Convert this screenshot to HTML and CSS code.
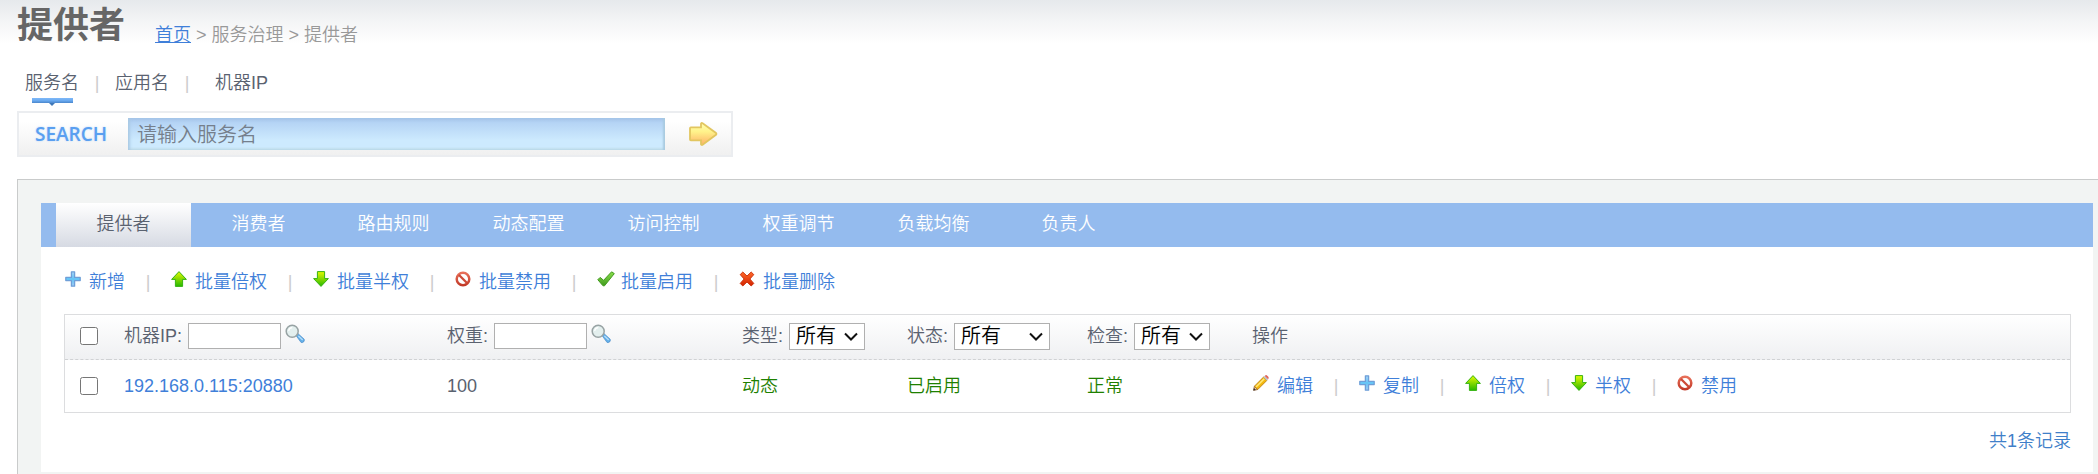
FILE: index.html
```html
<!DOCTYPE html>
<html lang="zh-CN">
<head>
<meta charset="utf-8">
<title>提供者</title>
<link rel="stylesheet" href="styles.css">
</head>
<body>
<svg class="sprite" aria-hidden="true">
  <defs>
    <linearGradient id="g-blue" x1="0" y1="0" x2="0" y2="1"><stop offset="0" stop-color="#a8d4f8"/><stop offset=".5" stop-color="#62c4f6"/><stop offset="1" stop-color="#a4cdf5"/></linearGradient>
    <linearGradient id="g-up" x1="0" y1="0" x2="0" y2="1"><stop offset="0" stop-color="#e4fa00"/><stop offset="1" stop-color="#27b800"/></linearGradient>
    <linearGradient id="g-check" x1="0" y1="0" x2="0" y2="1"><stop offset="0" stop-color="#8be04c"/><stop offset="1" stop-color="#3f9a1c"/></linearGradient>
    <linearGradient id="g-red" x1="0" y1="0" x2="0" y2="1"><stop offset="0" stop-color="#ff6a2a"/><stop offset="1" stop-color="#d32200"/></linearGradient>
    <linearGradient id="g-ban" x1="0" y1="0" x2="0" y2="1"><stop offset="0" stop-color="#e8705a"/><stop offset="1" stop-color="#c23a28"/></linearGradient>
    <linearGradient id="g-gold" x1="0" y1="0" x2="0" y2="1"><stop offset="0" stop-color="#ffffb0"/><stop offset=".4" stop-color="#fff28a"/><stop offset="1" stop-color="#fdb068"/></linearGradient>
  </defs>
  <symbol id="i-add" viewBox="0 0 16 16"><path d="M6.400.8h3.200v5.600h5.600v3.200H9.600v5.600H6.400V9.600H.8V6.400h5.600z" fill="url(#g-blue)" stroke="#6f9fd8" stroke-width="1.300" stroke-linejoin="round"/></symbol>
  <symbol id="i-up" viewBox="0 0 16 16"><path d="M8 .6 15.400 8.400H11.600V15.400H4.400V8.400H.6z" fill="url(#g-up)" stroke="#35b312" stroke-width="1" stroke-linejoin="round"/></symbol>
  <symbol id="i-down" viewBox="0 0 16 16"><path d="M8 15.400.6 7.600H4.400V.6H11.600V7.600H15.400z" fill="url(#g-up)" stroke="#35b312" stroke-width="1" stroke-linejoin="round"/></symbol>
  <symbol id="i-ban" viewBox="0 0 16 16"><circle cx="8" cy="8" r="6.300" fill="#fff" stroke="url(#g-ban)" stroke-width="2.500"/><path d="m4 4 8 8" stroke="#cd4a37" stroke-width="2.300"/></symbol>
  <symbol id="i-check" viewBox="0 0 18 16"><path d="m.8 8.700 2.300-2.300 3.500 2.900L14.600.8 17.300 2.600 7.500 14.800H6z" fill="url(#g-check)" stroke="#439a20" stroke-width="1" stroke-linejoin="round"/></symbol>
  <symbol id="i-delete" viewBox="0 0 16 16"><path d="M1.200 3.600 3.800 1 8 5 12.200 1 14.800 3.600 10.900 8 14.800 12.400 12.200 15 8 11 3.800 15 1.200 12.400 5.100 8z" fill="url(#g-red)" stroke="#c72b05" stroke-width=".9" stroke-linejoin="round"/></symbol>
  <symbol id="i-edit" viewBox="0 0 16 16"><path d="M.6 15.300 1.400 11.200 4.800 14.500z" fill="#f3cfa6" stroke="#8f6038" stroke-width=".9"/><path d="M.3 15.600 1 13l1.900 1.900z" fill="#333"/><path d="M1.400 11.200 10.500 2.100 13.900 5.400 4.800 14.500z" fill="#f3b90f" stroke="#b87810" stroke-width=".8"/><path d="m2.500 11.400 8.200-8.200 1.100 1.100-8.200 8.200z" fill="#ffe97a"/><path d="m10.500 2.100 1.200-1.200 3.400 3.300-1.200 1.200z" fill="#b9c2ca"/><path d="m11.700.9.8-.6q.8-.5 1.800.4l.8.9q.9 1 .4 1.800l-.4.8z" fill="#e0655c"/></symbol>
  <symbol id="i-find" viewBox="0 0 20 20"><path d="m11.200 11.800 2-2 6 5.400q.5 1.700-.6 2.700t-2.500.6z" fill="#62aee8" stroke="#4a8cc8" stroke-width=".7"/><path d="m13.400 12 4.300 4" stroke="#b8e0fa" stroke-width="1.200"/><circle cx="7.200" cy="7.200" r="6" fill="#e3efee" stroke="#98a3a4" stroke-width="1.500"/><path d="M3.600 6.800q.6-3 3.600-3.200" fill="none" stroke="#fff" stroke-width="1.300"/></symbol>
  <symbol id="i-go" viewBox="0 0 30 24"><path d="M2 6.200q0-.8.800-.8H13V1.600q.6-1 1.600-.4L28 11q.8 1 0 1.800L14.600 22.800q-1 .6-1.600-.4V18.400H2.800q-.8 0-.8-.8z" fill="url(#g-gold)" stroke="#e2c660" stroke-width="1.800"/></symbol>
</svg>

<header class="page-head">
  <h1 class="page-title">提供者</h1>
  <nav class="crumbs"><a href="#">首页</a> &gt; 服务治理 &gt; 提供者</nav>
</header>

<nav class="search-tabs">
  <a class="search-tab active" href="#">服务名</a><span class="bar">|</span>
  <a class="search-tab" href="#">应用名</a><span class="bar">|</span>
  <a class="search-tab last" href="#">机器IP</a>
</nav>

<form class="search">
  <label class="search-label" for="keyword">SEARCH</label>
  <input class="search-input" id="keyword" type="text" placeholder="请输入服务名">
  <button class="search-go" type="button" aria-label="搜索"><svg><use href="#i-go"/></svg></button>
</form>

<main class="panel">
  <div class="sheet">
    <nav class="tabs">
      <a class="tab active" href="#">提供者</a>
      <a class="tab" href="#">消费者</a>
      <a class="tab" href="#">路由规则</a>
      <a class="tab" href="#">动态配置</a>
      <a class="tab" href="#">访问控制</a>
      <a class="tab" href="#">权重调节</a>
      <a class="tab" href="#">负载均衡</a>
      <a class="tab" href="#">负责人</a>
    </nav>
    <div class="content">
      <div class="actions">
        <a href="#"><svg class="icon"><use href="#i-add"/></svg>新增</a><span class="bar">|</span>
        <a href="#"><svg class="icon"><use href="#i-up"/></svg>批量倍权</a><span class="bar">|</span>
        <a href="#"><svg class="icon"><use href="#i-down"/></svg>批量半权</a><span class="bar">|</span>
        <a href="#"><svg class="icon"><use href="#i-ban"/></svg>批量禁用</a><span class="bar">|</span>
        <a href="#"><svg class="icon wide"><use href="#i-check"/></svg>批量启用</a><span class="bar">|</span>
        <a href="#"><svg class="icon"><use href="#i-delete"/></svg>批量删除</a>
      </div>
      <table class="grid">
        <colgroup><col class="c-check"><col class="c-ip"><col class="c-weight"><col class="c-type"><col class="c-state"><col class="c-type"><col></colgroup>
        <thead>
          <tr>
            <th><input class="tick" type="checkbox" aria-label="全选"></th>
            <th><div class="filter"><label for="f-ip">机器IP:</label><input class="field" id="f-ip" type="text"><button class="find" type="button" aria-label="搜索机器IP"><svg><use href="#i-find"/></svg></button></div></th>
            <th><div class="filter"><label for="f-weight">权重:</label><input class="field" id="f-weight" type="text"><button class="find" type="button" aria-label="搜索权重"><svg><use href="#i-find"/></svg></button></div></th>
            <th><div class="filter"><label for="f-type">类型:</label><select class="pick" id="f-type"><option>所有</option><option>动态</option><option>静态</option></select></div></th>
            <th><div class="filter"><label for="f-state">状态:</label><select class="pick long" id="f-state"><option>所有</option><option>已启用</option><option>已禁用</option></select></div></th>
            <th><div class="filter"><label for="f-check">检查:</label><select class="pick" id="f-check"><option>所有</option><option>正常</option></select></div></th>
            <th>操作</th>
          </tr>
        </thead>
        <tbody>
          <tr>
            <td><input class="tick" type="checkbox" aria-label="选择 192.168.0.115:20880"></td>
            <td><a href="#">192.168.0.115:20880</a></td>
            <td>100</td>
            <td class="ok">动态</td>
            <td class="ok">已启用</td>
            <td class="ok">正常</td>
            <td>
              <div class="actions">
                <a href="#"><svg class="icon"><use href="#i-edit"/></svg>编辑</a><span class="bar">|</span>
                <a href="#"><svg class="icon"><use href="#i-add"/></svg>复制</a><span class="bar">|</span>
                <a href="#"><svg class="icon"><use href="#i-up"/></svg>倍权</a><span class="bar">|</span>
                <a href="#"><svg class="icon"><use href="#i-down"/></svg>半权</a><span class="bar">|</span>
                <a href="#"><svg class="icon"><use href="#i-ban"/></svg>禁用</a>
              </div>
            </td>
          </tr>
        </tbody>
      </table>
      <p class="total">共1条记录</p>
    </div>
  </div>
</main>
</body>
</html>
```
FILE: styles.css
```css
* { box-sizing: border-box; }

body {
  margin: 0;
  padding-left: 17px;
  background: #fff linear-gradient(#e6e9ec, #f4f5f6 50%, #fff) no-repeat 0 0 / 100% 44px;
  color: #5a6270;
  font: 350 18px/24px "Liberation Sans", "Noto Sans CJK SC", sans-serif;
}

a { color: #3f7fd9; text-decoration: none; }
button { padding: 0; border: 0; background: none; cursor: pointer; }
button svg { display: block; width: 100%; height: 100%; }
.sprite { position: absolute; width: 0; height: 0; }

.page-head { display: flex; gap: 30px; height: 48px; }
.page-title { margin: 0; color: #666; font-size: 36px; line-height: 52px; font-weight: 700; }
.crumbs { padding-top: 23px; color: #999; }
.crumbs a { text-decoration: underline; }

.search-tabs { display: flex; height: 63px; padding: 23px 0 0 8px; }
.search-tab { display: flex; flex-direction: column; align-items: center; color: #5a6270; }
.search-tab.last { padding-left: 10px; }
.search-tab.active::before { content: ""; order: 2; width: 41px; height: 5px; margin-top: 3px; background: linear-gradient(#7fb8f8, #6aaaf0 50%, #4a86cc); }
.search-tab.active::after { content: ""; order: 3; border: solid transparent; border-width: 3px 3px 0; border-top-color: #3f78b8; }
.bar { color: #ccc; }
.search-tabs .bar { width: 36px; text-align: center; }

.search {
  display: flex;
  align-items: center;
  width: 716px;
  max-width: 100%;
  height: 46px;
  padding-left: 16px;
  border: 2px solid #ebedf0;
  background: linear-gradient(#fff 20%, #f0f0f0);
}
.search-label { width: 93px; color: #5a9ff0; font: 600 19px/24px "Open Sans", sans-serif; text-shadow: 0 0 2px #b5d5fa; }
.search-input {
  flex: 1;
  min-width: 0;
  height: 32px;
  padding: 2px 9px 0;
  border: 0;
  background: linear-gradient(#a3c3e8, #b5d4f5 15%, #cdeafe 70%, #cdeafe 90%, #bfdde8);
  box-shadow: inset 3px 0 3px -1px #a9c9e4, inset -3px 0 2px -1px #a9cbe0;
  color: #333;
  font: inherit;
  font-size: 20px;
}
.search-input::placeholder { color: #757f8c; }
.search-go { width: 30px; height: 24px; margin: 0 13px 0 23px; }

.panel { margin-top: 22px; padding: 23px 5px 2px 23px; border: solid #c9cbcb; border-width: 1px 0 0 1px; background: #f2f4f3; }
.sheet { background: #fff; }
.tabs { display: flex; height: 44px; padding-left: 15px; background: #94bbee; }
.tab { width: 135px; color: #fff; line-height: 42px; text-align: center; }
.tab.active { background: linear-gradient(#fff, #d6dae3); color: #5a6270; }

.content { padding: 23px 22px 19px 23px; }
.actions { display: flex; padding-left: 1px; }
.actions a { display: flex; gap: 8px; }
.actions .bar { width: 46px; text-align: center; }
.icon { width: 16px; height: 16px; margin-top: 1px; }
.icon.wide { width: 18px; margin-right: -2px; }

.grid { width: 100%; margin-top: 20px; border: 1px solid #dcdddf; border-collapse: separate; border-spacing: 0; table-layout: fixed; }
.c-check { width: 44px; }
.c-ip { width: 323px; }
.c-weight { width: 295px; }
.c-type { width: 165px; }
.c-state { width: 180px; }
.grid th, .grid td { padding: 0 0 0 15px; font-weight: inherit; text-align: left; }
.grid th { height: 45px; padding-bottom: 2px; border-bottom: 1px dashed #d0d2d4; }
.grid thead { background: linear-gradient(#fff, #eff0f2); }
.grid td { height: 52px; }
.grid .ok { color: #1e8000; }
.tick { display: block; width: 18px; height: 18px; margin: 0; }
.filter { display: flex; align-items: center; gap: 6px; }
.field { width: 93px; height: 26px; padding: 0 4px; border: 1px solid #b0b0b0; background: #fff; font: inherit; }
.find { width: 20px; height: 20px; margin: 0 0 4px -2px; }
.pick {
  appearance: none;
  width: 76px;
  height: 27px;
  padding: 0 0 0 6px;
  border: 1px solid #b0b0b0;
  border-radius: 0;
  background: #fff url("data:image/svg+xml,%3Csvg xmlns='http://www.w3.org/2000/svg' width='14' height='9'%3E%3Cpath d='M1 1.500 7 7.500 13 1.500' fill='none' stroke='%23111' stroke-width='2'/%3E%3C/svg%3E") no-repeat right 6px center;
  color: #000;
  font: inherit;
  font-size: 20px;
  line-height: 24px;
}
.pick.long { width: 96px; }
.total { margin: 16px 0 0; color: #3f7fc9; text-align: right; }
```
